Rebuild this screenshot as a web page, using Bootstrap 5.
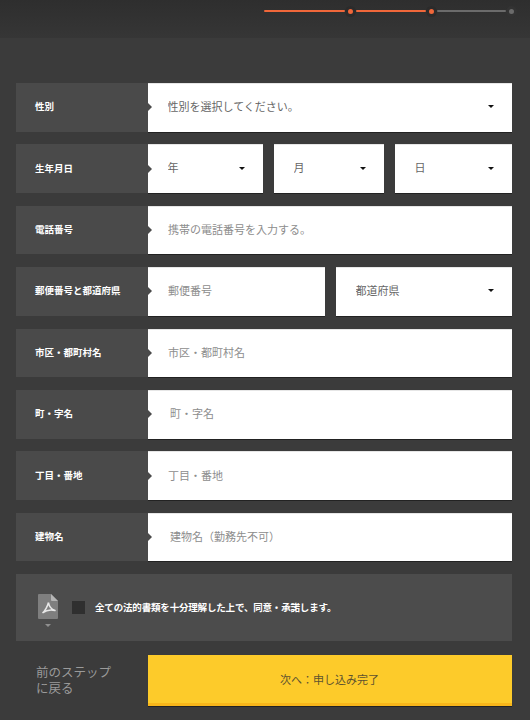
<!DOCTYPE html>
<html lang="ja">
<head>
<meta charset="utf-8">
<title>申し込み</title>
<link href="https://cdn.jsdelivr.net/npm/bootstrap@5.3.0/dist/css/bootstrap.min.css" rel="stylesheet">
<style>
html,body{height:720px;overflow:hidden}
body{background:#3b3b3b;font-family:"Noto Sans CJK JP","Noto Sans",sans-serif;}
.topbar{height:38px;background:linear-gradient(#2e2e2e,#363636);padding-left:264px;padding-top:5px}
.steps{height:12px}
.seg{height:2.5px;background:#f0673a;border-radius:1px}
.seg1{width:81px}.seg2{width:70px}.seg3{width:69px;background:#6b6b6b}
.dot{width:11px;height:11px;border-radius:50%;background:#f0673a;border:3px solid #2b2b2b;flex:none}
.dot-off{background:#6b6b6b;border-color:#333}
.formwrap{padding:45px 18px 0 16px}
.frow{height:48.6px;margin-bottom:12.8px}
.flabel{width:132px;background:#4a4a4a;color:#fff;font-size:9.5px;font-weight:700;padding:0 0 2px 19px;position:relative;flex:none}
.flabel::after{content:"";position:absolute;right:-4px;top:50%;margin-top:-4px;border-left:4px solid #4a4a4a;border-top:4px solid transparent;border-bottom:4px solid transparent;z-index:2}
.ffield{background:#fff;box-shadow:inset 0 1px 0 #e6e6e6,0 1px 0 #222;position:relative;height:100%}
.ffield .form-control,.ffield .form-select{height:100%;border:0;border-radius:0;background:transparent;background-image:none;box-shadow:none;font-size:11px;color:#666;padding:0 30px 2px 20px;-webkit-appearance:none;appearance:none}
.ffield .form-select{padding-left:19.5px}
.ffield .form-control::placeholder{color:#8d8d8d;opacity:1}
.ffield .pad22{padding-left:22px}
.selwrap::after{content:"";position:absolute;right:18px;top:50%;margin-top:-2px;border-top:3.5px solid #111;border-left:3.5px solid transparent;border-right:3.5px solid transparent;pointer-events:none}
.w-year{width:115px}.w-month{width:110px;margin-left:11px}.w-day{width:117px;margin-left:11px}
.w-zip{width:177px}.w-pref{width:176px;margin-left:11px}
.agree{height:67px;background:#4c4c4c;padding-left:22px}
.pdfcol{width:20px;height:27px;flex:none}
.pdfcaret{width:0;height:0;border-top:3px solid #8f8f8f;border-left:3.5px solid transparent;border-right:3.5px solid transparent;margin:5px auto 0}
.agree-box{width:13px;height:13px;background:#2f2f2f;border:0;border-radius:0;margin:0 0 0 14px;flex:none;-webkit-appearance:none;appearance:none}
.agree-text{color:#fff;font-size:9.5px;font-weight:700;margin:0 0 2px 10px;letter-spacing:-.018em}
.footrow{margin-top:14px}
.backlink{width:132px;flex:none;padding:0 0 1px 20px;color:#9a9a9a;font-size:12.5px;line-height:16px;text-decoration:none}
.nextbtn{flex:1;height:50.7px;background:#fdcb2a;border:0;border-radius:0;border-bottom:3px solid #f8b61a;box-shadow:0 1px 0 #222;font-size:11px;color:#5d5330;padding-left:11px}
</style>
</head>
<body>
<div class="topbar">
  <div class="steps d-flex align-items-center">
    <div class="seg seg1"></div><div class="dot"></div>
    <div class="seg seg2"></div><div class="dot"></div>
    <div class="seg seg3"></div><div class="dot dot-off"></div>
  </div>
</div>
<form class="formwrap">
  <div class="frow d-flex">
    <div class="flabel d-flex align-items-center">性別</div>
    <div class="ffield selwrap flex-grow-1"><select class="form-select"><option>性別を選択してください。</option></select></div>
  </div>
  <div class="frow d-flex">
    <div class="flabel d-flex align-items-center">生年月日</div>
    <div class="ffield selwrap w-year"><select class="form-select"><option>年</option></select></div>
    <div class="ffield selwrap w-month"><select class="form-select"><option>月</option></select></div>
    <div class="ffield selwrap w-day"><select class="form-select"><option>日</option></select></div>
  </div>
  <div class="frow d-flex">
    <div class="flabel d-flex align-items-center">電話番号</div>
    <div class="ffield flex-grow-1"><input class="form-control" placeholder="携帯の電話番号を入力する。"></div>
  </div>
  <div class="frow d-flex">
    <div class="flabel d-flex align-items-center">郵便番号と都道府県</div>
    <div class="ffield w-zip"><input class="form-control" placeholder="郵便番号"></div>
    <div class="ffield selwrap w-pref"><select class="form-select"><option>都道府県</option></select></div>
  </div>
  <div class="frow d-flex">
    <div class="flabel d-flex align-items-center">市区・都町村名</div>
    <div class="ffield flex-grow-1"><input class="form-control" placeholder="市区・都町村名"></div>
  </div>
  <div class="frow d-flex">
    <div class="flabel d-flex align-items-center">町・字名</div>
    <div class="ffield flex-grow-1"><input class="form-control pad22" placeholder="町・字名"></div>
  </div>
  <div class="frow d-flex">
    <div class="flabel d-flex align-items-center">丁目・番地</div>
    <div class="ffield flex-grow-1"><input class="form-control" placeholder="丁目・番地"></div>
  </div>
  <div class="frow d-flex">
    <div class="flabel d-flex align-items-center">建物名</div>
    <div class="ffield flex-grow-1"><input class="form-control pad22" placeholder="建物名（勤務先不可）"></div>
  </div>
  <div class="agree d-flex align-items-center">
    <div class="pdfcol">
      <svg width="20" height="25" viewBox="0 0 20 25" class="d-block">
        <path d="M1 0H13L20 7V24a1 1 0 0 1-1 1H1a1 1 0 0 1-1-1V1a1 1 0 0 1 1-1Z" fill="#7f7f7f"/>
        <path d="M13 0L20 7H14a1 1 0 0 1-1-1Z" fill="#b5b5b5"/>
        <path d="M10.5 8.5C9.500 12 8 16 4.500 19M10.500 8.500C11 12 12.500 15 17 16.500C13.500 15.500 8.500 16 4.500 19" fill="none" stroke="#e8e8e8" stroke-width="1.5" stroke-linejoin="round"/>
      </svg>
      <div class="pdfcaret"></div>
    </div>
    <input type="checkbox" class="agree-box" aria-label="同意">
    <p class="agree-text">全ての法的書類を十分理解した上で、同意・承諾します。</p>
  </div>
  <div class="footrow d-flex align-items-center">
    <a href="#" class="backlink">前のステップ<br>に戻る</a>
    <button type="button" class="btn nextbtn">次へ：申し込み完了</button>
  </div>
</form>
<script src="https://cdn.jsdelivr.net/npm/bootstrap@5.3.0/dist/js/bootstrap.bundle.min.js"></script>
</body>
</html>
